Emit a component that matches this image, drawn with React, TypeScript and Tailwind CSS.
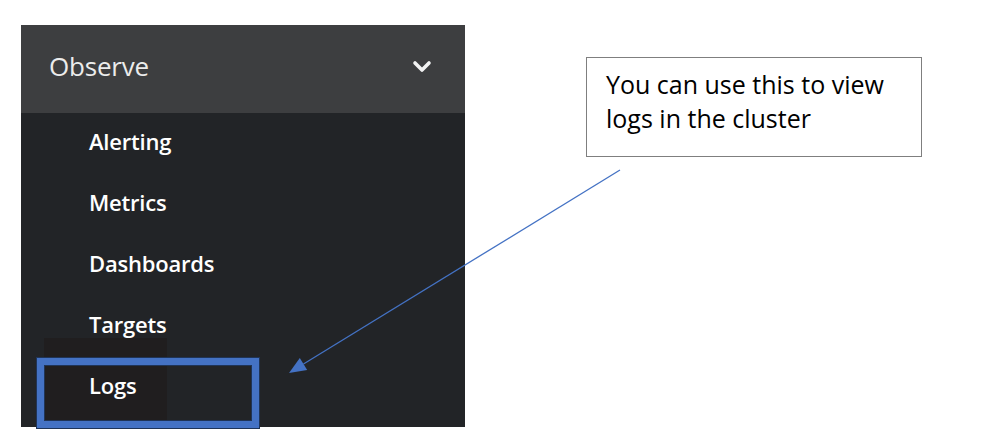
import React from "react";

const items = ["Alerting", "Metrics", "Dashboards", "Targets"];

export default function App() {
  return (
    <div className="relative flex h-[448px] w-[998px] items-start overflow-hidden bg-white">
      {/* Sidebar panel */}
      <div className="ml-[21px] mt-[25px] flex h-[402px] w-[444px] flex-col overflow-hidden bg-[#222427]">
        <div className="flex h-[88px] shrink-0 items-center justify-between bg-[#3d3e40] pb-[6px] pl-[28px] pr-[33px]">
          <span className="font-['Open_Sans',sans-serif] text-[26px] leading-[36px] tracking-[-0.2px] text-[#ececec]">
            Observe
          </span>
          <svg width="20" height="14" viewBox="0 0 20 14" className="mt-[2px]">
            <path d="M3 3 L10 10 L17 3" fill="none" stroke="#f2f2f2" strokeWidth="3.6" strokeLinecap="round" strokeLinejoin="round" />
          </svg>
        </div>
        <div className="flex flex-col gap-[31px] pt-[12.5px] font-['Open_Sans',sans-serif] text-[22px] font-semibold leading-[30px] tracking-[-0.2px] text-white">
          {items.map((t) => (
            <div key={t} className="pl-[68px]">
              {t}
            </div>
          ))}
          <div className="relative ml-[23px] w-[123px] pl-[45px]">
            <div className="absolute -top-[32px] -bottom-[27px] left-0 right-0 bg-[#201e1f]" />
            <span className="relative">Logs</span>
          </div>
        </div>
      </div>

      {/* Callout */}
      <div className="ml-[121px] mt-[57px] h-[100px] w-[336px] border border-[#7f7f7f] pl-[19px] pt-[9px] font-['Open_Sans',sans-serif] text-[25px] leading-[34px] text-black">
        You can use this to view
        <br />
        logs in the cluster
      </div>

      {/* Highlight box around Logs */}
      <div className="absolute left-[37px] top-[358px] h-[70px] w-[222px] border-[7px] border-[#4472c4] shadow-[0_0_0_1px_#1f3457,inset_0_0_0_1px_#1f3457]" />

      {/* Arrow */}
      <svg className="pointer-events-none absolute left-0 top-0" width="998" height="448" viewBox="0 0 998 448">
        <line x1="620" y1="170" x2="303.5" y2="364" stroke="#4472c4" strokeWidth="1.3" />
        <polygon points="289,373 299.8,358.1 307.2,370.1" fill="#4472c4" />
      </svg>
    </div>
  );
}
